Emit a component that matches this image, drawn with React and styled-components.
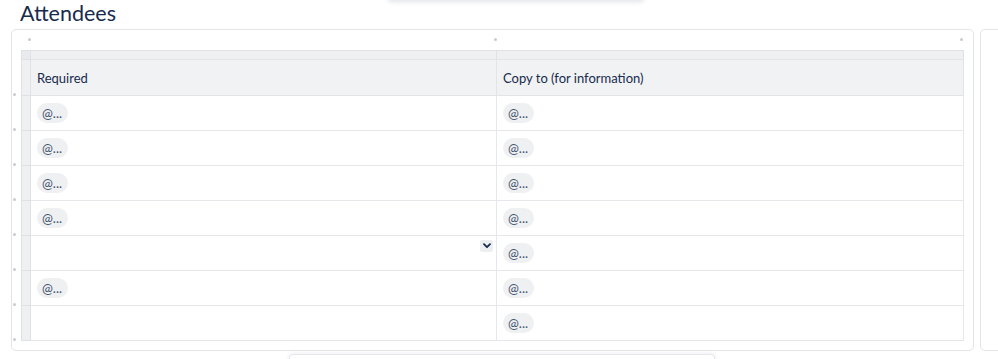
import React from "react";
import styled, { createGlobalStyle } from "styled-components";

const Global = createGlobalStyle`
  html, body { margin: 0; padding: 0; background: #ffffff; }
  body { font-family: Lato, "Noto Sans", sans-serif; color: #172b4d; overflow: hidden; }
`;

const Page = styled.div`
  position: relative;
  width: 998px;
  height: 359px;
  overflow: hidden;
`;

const TopPopup = styled.div`
  position: absolute;
  left: 388px;
  top: -20px;
  width: 256px;
  height: 20px;
  background: #fff;
  border-radius: 4px;
  box-shadow: 0 2px 5px rgba(9, 30, 66, 0.12);
`;

const BottomPopup = styled.div`
  position: absolute;
  left: 289px;
  top: 354px;
  width: 424px;
  height: 30px;
  background: #fff;
  border: 1px solid #e6e7ea;
  border-radius: 4px;
  box-shadow: 0 0 4px rgba(9, 30, 66, 0.1);
`;

const Heading = styled.h2`
  margin: 0;
  padding: 0 0 0 20px;
  height: 29px;
  font-size: 21.5px;
  font-weight: 400;
  line-height: 26px;
  color: #172b4d;
`;

const Cards = styled.div`
  display: flex;
  gap: 6px;
  padding-left: 11px;
`;

const Card = styled.div`
  display: grid;
  grid-template-columns: 9px 1fr;
  grid-template-rows: 20px auto;
  flex: 0 0 auto;
  width: 963px;
  height: 322px;
  box-sizing: border-box;
  border: 1px solid #e3e4e7;
  border-radius: 5px;
  padding: 0 9px 9px 0;
`;

const SideCard = styled.div`
  flex: 0 0 60px;
  height: 322px;
  box-sizing: border-box;
  border: 1px solid #e3e4e7;
  border-radius: 5px;
`;

const TopDots = styled.div`
  grid-column: 2;
  display: flex;
  justify-content: space-between;
  align-items: center;
  padding: 0 1px 2px 7px;
  height: 20px;
  box-sizing: border-box;
`;

const SideDots = styled.div`
  grid-column: 1;
  display: flex;
  flex-direction: column;
  gap: 32px;
  padding: 43px 0 0 1px;
`;

const Dot = styled.span`
  display: block;
  width: 3px;
  height: 3px;
  border-radius: 50%;
  background: #c9ccd2;
`;

const Table = styled.table`
  border-collapse: collapse;
  table-layout: fixed;
  width: 943px;
  font-size: 13px;
`;

const Corner = styled.td`
  width: 8px;
  height: 8px;
  padding: 0;
  background: #e9eaed;
  border: 1px solid #dfe1e5;
`;

const ControlCell = styled.td`
  height: 8px;
  padding: 0;
  background: #eff0f2;
  border: 1px solid #dfe1e5;
  border-bottom-color: #e2e4e8;
`;

const NumCell = styled.td`
  width: 8px;
  padding: 0;
  background: #eff0f2;
  border: 1px solid #dfe1e5;
`;

const HeadCell = styled.th`
  height: 35px;
  padding: 0 6px;
  text-align: left;
  font-weight: 400;
  color: #172b4d;
  background: #f1f2f4;
  border: 1px solid #e3e4e7;
`;

const Cell = styled.td`
  position: relative;
  height: 34px;
  padding: 0 6px;
  border: 1px solid #e6e7ea;
  vertical-align: middle;
`;

const Mention = styled.span`
  display: inline-flex;
  align-items: center;
  height: 20px;
  padding: 0 6px 0 5px;
  border-radius: 10px;
  background: #eff0f2;
  color: #44546f;
  font-size: 13px;
`;

const Chevron = styled.button`
  position: absolute;
  right: 3px;
  top: 4px;
  width: 13px;
  height: 12px;
  padding: 0;
  border: none;
  border-radius: 2px;
  background: #eceef1;
  display: flex;
  align-items: center;
  justify-content: center;
`;

const rows = [
  [true, true],
  [true, true],
  [true, true],
  [true, true],
  [false, true, true],
  [true, true],
  [false, true],
];

export default function App() {
  return (
    <Page>
      <Global />
      <TopPopup />
      <Heading>Attendees</Heading>
      <Cards>
        <Card>
          <TopDots>
            <Dot />
            <Dot />
            <Dot />
          </TopDots>
          <SideDots>
            {Array.from({ length: 8 }, (_, i) => (
              <Dot key={i} />
            ))}
          </SideDots>
          <Table>
            <colgroup>
              <col style={{ width: 9 }} />
              <col style={{ width: 466 }} />
              <col style={{ width: 467 }} />
            </colgroup>
            <tbody>
              <tr>
                <Corner />
                <ControlCell />
                <ControlCell />
              </tr>
              <tr>
                <NumCell />
                <HeadCell>Required</HeadCell>
                <HeadCell>Copy to (for information)</HeadCell>
              </tr>
              {rows.map((r, i) => (
                <tr key={i}>
                  <NumCell />
                  <Cell>
                    {r[0] && <Mention>@...</Mention>}
                    {r[2] && (
                      <Chevron aria-label="expand">
                        <svg width="8" height="6" viewBox="0 0 8 6">
                          <path d="M1 1.2 L4 4.2 L7 1.2" fill="none" stroke="#172b4d" strokeWidth="1.8" strokeLinecap="round" strokeLinejoin="round" />
                        </svg>
                      </Chevron>
                    )}
                  </Cell>
                  <Cell>{r[1] && <Mention>@...</Mention>}</Cell>
                </tr>
              ))}
            </tbody>
          </Table>
        </Card>
        <SideCard />
      </Cards>
      <BottomPopup />
    </Page>
  );
}
